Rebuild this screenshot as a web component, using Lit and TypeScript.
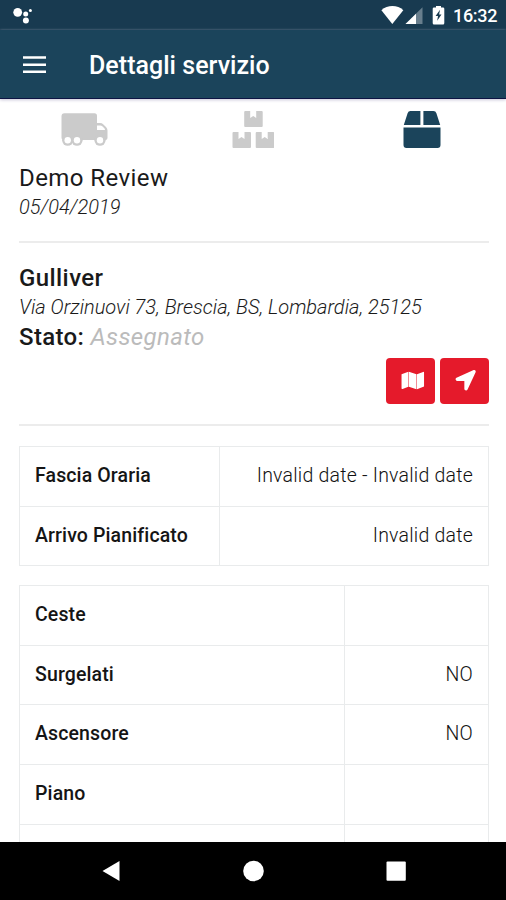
import { LitElement, html, css, svg } from "lit";
import { customElement, property } from "lit/decorators.js";

interface Row {
  label: string;
  value: string;
}

const timeRows: Row[] = [
  { label: "Fascia Oraria", value: "Invalid date - Invalid date" },
  { label: "Arrivo Pianificato", value: "Invalid date" },
];

const detailRows: Row[] = [
  { label: "Ceste", value: "" },
  { label: "Surgelati", value: "NO" },
  { label: "Ascensore", value: "NO" },
  { label: "Piano", value: "" },
  { label: "", value: "" },
];

const crate = (x: number, y: number) =>
  svg`<path transform="translate(${x} ${y})" d="M1 0H6v7l3-2 3 2V0h5.500q1 0 1 1V15q0 1-1 1H1q-1 0-1-1V1q0-1 1-1z"/>`;

const wheel = (x: number) =>
  svg`<circle cx=${x} cy="140.200" r="5.600"/><circle cx=${x} cy="140.200" r="3.200" fill="#fff"/>`;

@customElement("status-bar")
export class StatusBar extends LitElement {
  static styles = css`
    :host {
      display: flex;
      justify-content: space-between;
      height: 30px;
      background: #183a50;
      color: #fff;
    }
    svg {
      display: block;
      fill: currentColor;
    }
    .right {
      display: flex;
    }
    .clock {
      width: 53px;
      font-size: 18px;
      font-weight: 500;
      line-height: 32px;
      letter-spacing: -0.3px;
    }
  `;

  render() {
    return html`
      <svg width="40" height="30" viewBox="0 0 40 30">
        <circle cx="17.700" cy="12.300" r="4.400" />
        <circle cx="25.700" cy="14" r="2.500" />
        <circle cx="25.900" cy="20.500" r="3" />
        <circle cx="30.400" cy="10.500" r="1.500" />
      </svg>
      <div class="right">
        <svg width="72" height="30" viewBox="381 0 72 30">
          <path d="M392.300 24 381.400 10.200C387.500 4.700 397.500 4.700 403.300 10.200z" />
          <path d="M422.500 7.200V24H405.500z" opacity=".35" />
          <path d="M416 13.700V24H405.500z" />
          <path
            fill-rule="evenodd"
            d="M434 7.500h2V6h5v1.500h2q1.300 0 1.300 1.300V23q0 1.500-1.300 1.500h-9q-1.300 0-1.300-1.500V8.800q0-1.300 1.300-1.300zM440 9.800l-4.400 6.200h2.400l-.800 4.800 4.300-6.300h-2.400z"
          />
        </svg>
        <span class="clock">16:32</span>
      </div>
    `;
  }
}

@customElement("info-table")
export class InfoTable extends LitElement {
  @property({ attribute: false }) rows: Row[] = [];
  @property({ type: Number }) split = 200;

  static styles = css`
    :host {
      display: block;
      border: 1px solid #e9ebec;
      border-bottom: 0;
    }
    .row {
      display: grid;
      height: 58.600px;
      border-bottom: 1px solid #e9ebec;
      line-height: 58px;
      font-size: 19.500px;
    }
    .label {
      padding-left: 15px;
      border-right: 1px solid #e9ebec;
      font-weight: 500;
      color: #151515;
      letter-spacing: 0.120px;
    }
    .value {
      padding-right: 15px;
      text-align: right;
      font-weight: 300;
      color: #111;
      letter-spacing: 0.220px;
    }
  `;

  render() {
    return this.rows.map(
      (row) => html`
        <div class="row" style="grid-template-columns:${this.split}px 1fr">
          <span class="label">${row.label}</span>
          <span class="value">${row.value}</span>
        </div>
      `
    );
  }
}

@customElement("app-root")
export class AppRoot extends LitElement {
  static styles = css`
    :host {
      display: flex;
      flex-direction: column;
      width: 506px;
      height: 900px;
      overflow: hidden;
      background: #fff;
      color: #1a1a1a;
      font-family: Roboto, "Liberation Sans", sans-serif;
    }
    svg {
      display: block;
    }
    status-bar,
    .toolbar,
    .nav {
      flex: none;
    }
    .toolbar {
      display: flex;
      align-items: center;
      box-sizing: border-box;
      height: 69px;
      padding-left: 23px;
      gap: 43px;
      background: #1b445b;
      border-bottom: 1px solid #0d1443;
      box-shadow: 0 1px 3px #c9c5d8;
      color: #fff;
      z-index: 1;
    }
    .title {
      font-size: 25px;
      font-weight: 500;
      line-height: 30px;
      padding-top: 4px;
      letter-spacing: 0.030px;
    }
    .menu {
      margin-top: 1px;
    }
    .content {
      flex: 1;
      min-height: 0;
      overflow: hidden;
    }
    .steps {
      display: grid;
      grid-template-columns: repeat(3, 1fr);
      justify-items: center;
      padding-top: 11px;
      height: 52px;
      fill: #cbcbcb;
    }
    .active {
      fill: #1b445b;
    }
    .body {
      padding: 0 17px 0 19px;
    }
    .name {
      font-size: 24px;
      line-height: 32px;
      letter-spacing: 0.420px;
    }
    .sub {
      font-size: 20px;
      line-height: 26px;
      font-style: italic;
      font-weight: 300;
      letter-spacing: 0;
      white-space: nowrap;
    }
    .strong {
      font-weight: 500;
    }
    .status {
      font-size: 24px;
      line-height: 34px;
      letter-spacing: 0.350px;
    }
    .status i {
      color: #bbb;
      font-weight: 400;
    }
    .line {
      height: 2px;
      background: #ececec;
    }
    .first {
      margin: 21px 0 19px;
    }
    .actions {
      display: flex;
      justify-content: flex-end;
      gap: 5.500px;
      margin: 4px 0 20px;
    }
    .button {
      width: 48.700px;
      height: 46px;
      border-radius: 4px;
      background: #e51a2b;
      fill: #fff;
    }
    .tables {
      display: grid;
      gap: 19px;
      padding: 20px 0 0;
    }
    .nav {
      height: 58px;
      background: #000;
      fill: #fff;
    }
  `;

  render() {
    return html`
      <status-bar></status-bar>
      <header class="toolbar">
        <svg class="menu" width="23" height="18" viewBox="0 0 23 18" fill="#fff">
          <path d="M0 .300h23v2.500H0zM0 7.500h23V10H0zM0 14.600h23v2.500H0z" />
        </svg>
        <span class="title">Dettagli servizio</span>
      </header>
      <main class="content">
        <div class="steps">
          <svg width="48" height="40" viewBox="60 110 48 40">
            <path
              fill-rule="evenodd"
              d="M64.500 113.200H94.500q2.500 0 2.500 2.500V123h3q2 0 3.400 1.400l2.600 2.600q1.500 1.500 1.500 3.500v7.500q0 2-2 2H64q-2.500 0-2.500-2.500V116.200q0-3 3-3zM97 125.500v4.500h8q0-1-.700-1.700l-2-2q-.800-.800-2-.800z"
            />
            ${wheel(67.700)} ${wheel(77)} ${wheel(100)}
          </svg>
          <svg width="42" height="40" viewBox="-.500 0 42 40">
            ${crate(11.700, 1)} ${crate(0, 22)} ${crate(23.200, 22)}
          </svg>
          <svg class="active" width="38" height="40" viewBox="0 0 38 40">
            <path
              d="M7.500 1H17.400V15H.800L4.600 3.300Q5.300 1 7.500 1zM20.400 1h10q2.300 0 3 2.300L37.200 15H20.400zM.500 17.500h37V35q0 3-3 3H3.500q-3 0-3-3z"
            />
          </svg>
        </div>
        <div class="body">
          <div class="name">Demo Review</div>
          <div class="sub">05/04/2019</div>
          <div class="line first"></div>
          <div class="name strong">Gulliver</div>
          <div class="sub">Via Orzinuovi 73, Brescia, BS, Lombardia, 25125</div>
          <div class="status"><span class="strong">Stato:</span> <i>Assegnato</i></div>
          <div class="actions">
            <svg class="button" viewBox="0 0 49 47">
              <path
                d="M15.500 16.500 22.500 14V29.500L16.500 31.600Q15.500 32 15.500 31zM23 14 30.800 16.600V32L23 29.500zM31.300 16.600 37.500 14.200Q38.500 13.900 38.500 15V29.200L31.300 32z"
              />
            </svg>
            <svg class="button" viewBox="0 0 49 47">
              <path
                d="M34 12.300 16.500 20.300C15 21 15.400 23.500 17.200 23.500H24.500V31.500C24.500 33.400 27 33.900 27.800 32.200L36 14.600C36.600 13 35.400 11.700 34 12.300z"
              />
            </svg>
          </div>
          <div class="line"></div>
          <div class="tables">
            <info-table .rows=${timeRows} .split=${200}></info-table>
            <info-table .rows=${detailRows} .split=${325}></info-table>
          </div>
        </div>
      </main>
      <footer class="nav">
        <svg width="506" height="58" viewBox="0 842 506 58">
          <path d="M102.500 871 119.500 861v20z" />
          <circle cx="253.500" cy="871" r="10.300" />
          <rect x="386.500" y="861.500" width="19.300" height="19.300" rx="1" />
        </svg>
      </footer>
    `;
  }
}
